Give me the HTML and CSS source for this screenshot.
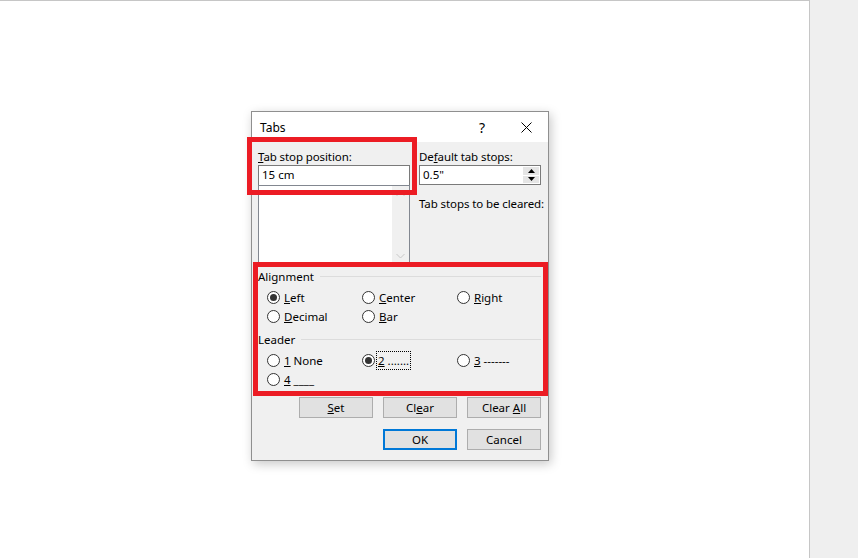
FILE: index.html
```html
<!DOCTYPE html>
<html lang="en">
<head>
    <meta charset="UTF-8">
    <title>Tabs</title>
    <link rel="stylesheet" href="styles.css">
</head>
<body>
    <div class="page"></div>

    <div class="dialog">
        <div class="titlebar">
            <span class="title">Tabs</span>
            <span class="help">?</span>
            <span class="close">
                <svg width="11" height="11" viewBox="0 0 11 11">
                    <path d="M0.5 0.5 L10.5 10.5 M10.5 0.5 L0.5 10.5" stroke="#000" stroke-width="1" fill="none"/>
                </svg>
            </span>
        </div>

        <div class="body">
            <div class="top">
                <div class="col">
                    <div class="label"><u>T</u>ab stop position:</div>
                    <div class="textbox">15 cm</div>
                    <div class="listbox">
                        <div class="scroll">
                            <svg width="9" height="6" viewBox="0 0 9 6"><path d="M0.5 5 L4.5 1 L8.5 5" stroke="#c8c8c8" fill="none"/></svg>
                            <svg width="9" height="6" viewBox="0 0 9 6"><path d="M0.5 1 L4.5 5 L8.5 1" stroke="#c8c8c8" fill="none"/></svg>
                        </div>
                    </div>
                </div>
                <div class="col">
                    <div class="label">De<u>f</u>ault tab stops:</div>
                    <div class="textbox spin">
                        <span>0.5"</span>
                        <div class="spin-btns">
                            <div class="spin-btn">
                                <svg width="7" height="4" viewBox="0 0 7 4"><path d="M0 4 L3.5 0 L7 4 Z" fill="#000"/></svg>
                            </div>
                            <div class="spin-btn">
                                <svg width="7" height="4" viewBox="0 0 7 4"><path d="M0 0 L3.5 4 L7 0 Z" fill="#000"/></svg>
                            </div>
                        </div>
                    </div>
                    <div class="label cleared">Tab stops to be cleared:</div>
                </div>
            </div>

            <div class="group-head">
                <span>Alignment</span>
                <span class="rule"></span>
            </div>
            <div class="radios first">
                <label class="radio"><span class="dot checked"></span><span><u>L</u>eft</span></label>
                <label class="radio"><span class="dot"></span><span><u>C</u>enter</span></label>
                <label class="radio"><span class="dot"></span><span><u>R</u>ight</span></label>
                <label class="radio"><span class="dot"></span><span><u>D</u>ecimal</span></label>
                <label class="radio"><span class="dot"></span><span><u>B</u>ar</span></label>
            </div>

            <div class="group-head leader">
                <span>Leader</span>
                <span class="rule"></span>
            </div>
            <div class="radios">
                <label class="radio"><span class="dot"></span><span><u>1</u> None</span></label>
                <label class="radio"><span class="dot checked"></span><span class="focus"><u>2</u> .......</span></label>
                <label class="radio"><span class="dot"></span><span><u>3</u> -------</span></label>
                <label class="radio"><span class="dot"></span><span><u>4</u> ____</span></label>
            </div>

            <div class="buttons">
                <button><u>S</u>et</button>
                <button>Cl<u>e</u>ar</button>
                <button>Clear <u>A</u>ll</button>
            </div>
            <div class="buttons last">
                <button class="default">OK</button>
                <button>Cancel</button>
            </div>
        </div>
    </div>

    <!-- annotation boxes -->
    <div class="mark mark-position"></div>
    <div class="mark mark-groups"></div>
</body>
</html>
```

FILE: styles.css
```css
body {
    margin: 0;
    background-color: #efefef;
    font-family: "Noto Sans", "Segoe UI", sans-serif;
    font-size: 11.5px;
    color: #000;
    height: 558px;
    overflow: hidden;
}

.page {
    width: 810px;
    height: 558px;
    box-sizing: border-box;
    background-color: #fff;
    border-top: 1px solid #c6c6c6;
    border-right: 1px solid #c6c6c6;
}

.dialog {
    position: absolute;
    left: 251px;
    top: 111px;
    width: 298px;
    height: 350px;
    box-sizing: border-box;
    border: 1px solid #8f8f8f;
    background-color: #f0f0f0;
    box-shadow: 2px 3px 10px rgba(0,0,0,0.22);
}

.titlebar {
    height: 30px;
    background-color: #fff;
    display: flex;
    align-items: center;
    padding-left: 8px;
}

.title {
    flex: 1;
    font-size: 12px;
}

.help {
    width: 12px;
    font-size: 14px;
    text-align: center;
    margin-right: 33px;
}

.close {
    display: flex;
    margin-right: 16px;
}

.body {
    padding: 0 7px 0 6px;
}

.label {
    height: 15px;
    line-height: 15px;
    margin-top: 7px;
    white-space: nowrap;
    letter-spacing: -0.1px;
}

.label.cleared {
    margin-top: 11px;
}

.top {
    display: grid;
    grid-template-columns: 152px 122px;
    column-gap: 9px;
    height: 121px;
}

.textbox {
    margin-top: 1px;
    height: 21px;
    box-sizing: border-box;
    border: 1px solid #7a7a7a;
    background-color: #fff;
    padding-left: 3px;
    line-height: 18px;
}

.textbox.spin {
    height: 20px;
    display: flex;
    justify-content: space-between;
    padding-right: 0;
}

.spin-btns {
    width: 16px;
    display: flex;
    flex-direction: column;
    padding: 1px;
    gap: 1px;
}

.spin-btn {
    flex: 1;
    background-color: #e5e5e5;
    display: flex;
    align-items: center;
    justify-content: center;
}

.listbox {
    margin-top: -1px;
    height: 78px;
    box-sizing: border-box;
    border: 1px solid #828790;
    border-bottom: none;
    background-color: #fff;
    display: flex;
    justify-content: flex-end;
}

.scroll {
    width: 17px;
    background-color: #f0f0f0;
    display: flex;
    flex-direction: column;
    justify-content: space-between;
    align-items: center;
    padding: 5px 0 4px;
}

.group-head {
    display: flex;
    align-items: center;
    height: 15px;
    line-height: 15px;
    margin-top: 6px;
}

.rule {
    flex: 1;
    height: 1px;
    background-color: #dcdcdc;
    margin-left: 6px;
}

.radios {
    display: grid;
    grid-template-columns: 95px 95px 95px;
    grid-auto-rows: 19px;
    padding-left: 9px;
    margin-top: 4px;
}

.radio {
    display: flex;
    align-items: center;
    gap: 4px;
    white-space: nowrap;
}

.dot {
    width: 13px;
    height: 13px;
    box-sizing: border-box;
    border: 1px solid #333;
    border-radius: 50%;
    background-color: #fff;
    display: flex;
    align-items: center;
    justify-content: center;
}

.dot.checked::after {
    content: "";
    width: 7px;
    height: 7px;
    border-radius: 50%;
    background-color: #333;
}

.focus {
    outline: 1px dotted #000;
    padding: 1px;
    margin-left: -2px;
}

.buttons {
    display: flex;
    justify-content: flex-end;
    gap: 10px;
    margin-top: 8px;
}

.buttons.last {
    margin-top: 11px;
}

button {
    width: 74px;
    height: 21px;
    box-sizing: border-box;
    background-color: #e1e1e1;
    border: 1px solid #adadad;
    font-family: inherit;
    font-size: 11.5px;
    padding: 0;
    color: #000;
}

button.default {
    border: 2px solid #0078d7;
}

.mark {
    position: absolute;
    box-sizing: border-box;
    border: 5px solid #ec1c24;
}

.mark-position {
    left: 247px;
    top: 137px;
    width: 170px;
    height: 58px;
}

.mark-groups {
    left: 253px;
    top: 262px;
    width: 295px;
    height: 134px;
}
```
